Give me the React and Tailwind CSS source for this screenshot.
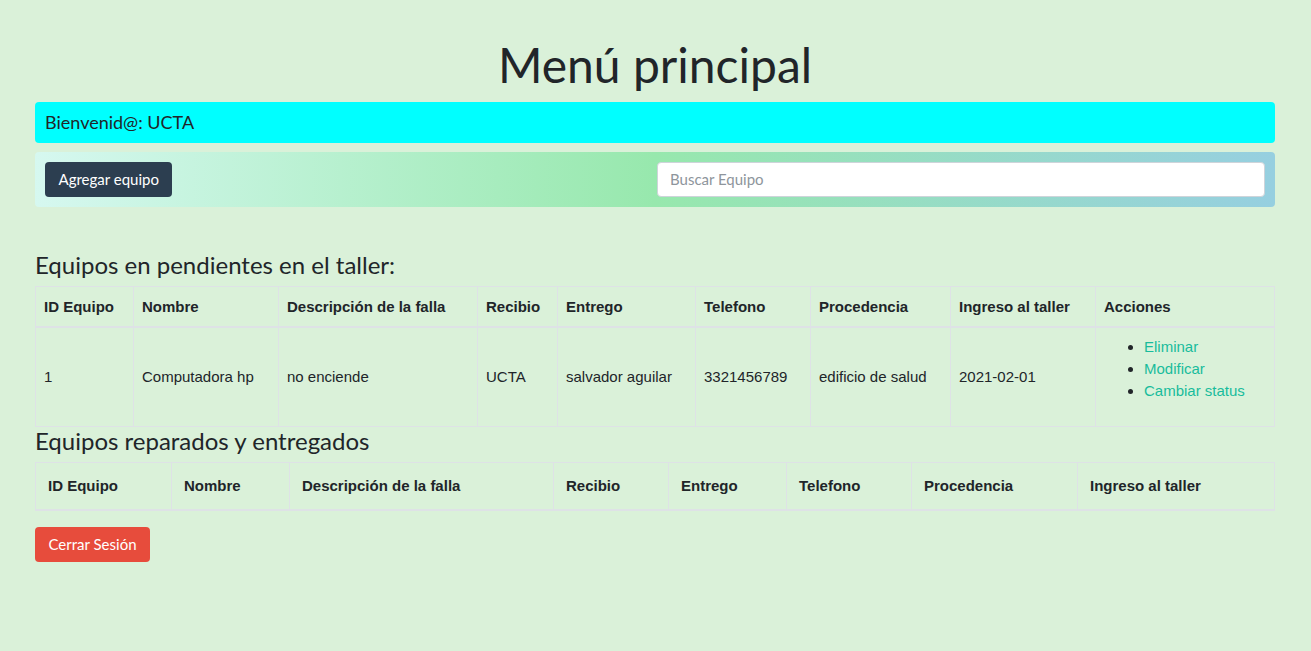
import React from "react";

const pending = [
  {
    id: "1",
    nombre: "Computadora hp",
    falla: "no enciende",
    recibio: "UCTA",
    entrego: "salvador aguilar",
    telefono: "3321456789",
    procedencia: "edificio de salud",
    ingreso: "2021-02-01",
  },
];

const headPending = [
  ["ID Equipo", "w-[98px]"],
  ["Nombre", "w-[145px]"],
  ["Descripción de la falla", "w-[199px]"],
  ["Recibio", "w-[80px]"],
  ["Entrego", "w-[138px]"],
  ["Telefono", "w-[115px]"],
  ["Procedencia", "w-[140px]"],
  ["Ingreso al taller", "w-[145px]"],
  ["Acciones", ""],
];

const headDone = [
  ["ID Equipo", "w-[136px]"],
  ["Nombre", "w-[118px]"],
  ["Descripción de la falla", "w-[264px]"],
  ["Recibio", "w-[115px]"],
  ["Entrego", "w-[118px]"],
  ["Telefono", "w-[125px]"],
  ["Procedencia", "w-[166px]"],
  ["Ingreso al taller", ""],
];

export default function App() {
  return (
    <div className="min-h-[651px] bg-[#daf1d9] font-['Lato',sans-serif] text-[#212529]">
      <div className="ml-[35px] mr-[36px] pt-[36px]">
        <h1 className="text-center text-[48px] leading-[1.2] mb-[8px]">Menú principal</h1>

        {/* welcome bar */}
        <div className="flex h-[41px] items-center rounded-[4px] bg-[#00ffff] px-[10px] text-[18px]">
          Bienvenid@: UCTA
        </div>

        {/* toolbar */}
        <div className="mt-[9px] flex items-center justify-between rounded-[4px] bg-[linear-gradient(to_right,#d6f8f0,#97e8ad_50%,#96cfe0)] p-[10px]">
          <button className="h-[35px] rounded-[4px] bg-[#2c3e50] px-[13.5px] text-[15px] text-white">
            Agregar equipo
          </button>
          <input
            placeholder="Buscar Equipo"
            className="h-[35px] w-[608px] rounded-[4px] border border-[#ced4da] bg-white px-[12px] text-[15px] placeholder:text-[#8e959c] outline-none"
          />
        </div>

        <h3 className="mt-[44px] mb-[7px] text-[24px] leading-[1.2]">Equipos en pendientes en el taller:</h3>
        <table className="w-full border-collapse font-['Liberation_Sans',Arial,sans-serif] text-[15px] leading-[22px]">
          <thead>
            <tr>
              {headPending.map(([h, w]) => (
                <th
                  key={h}
                  className={`${w} border border-b-2 border-[#dee2e6] px-[8px] pt-[9px] pb-[8px] text-left font-bold`}
                >
                  {h}
                </th>
              ))}
            </tr>
          </thead>
          <tbody>
            {pending.map((r) => (
              <tr key={r.id}>
                {[r.id, r.nombre, r.falla, r.recibio, r.entrego, r.telefono, r.procedencia, r.ingreso].map(
                  (v, i) => (
                    <td key={i} className="border border-[#dee2e6] p-[8px] align-middle">
                      {v}
                    </td>
                  )
                )}
                <td className="border border-[#dee2e6] p-[8px] align-middle">
                  <ul className="mb-[16px] list-disc pl-[40px] text-[#18bc9c]">
                    <li className="marker:text-[#212529]">Eliminar</li>
                    <li className="marker:text-[#212529]">Modificar</li>
                    <li className="marker:text-[#212529]">Cambiar status</li>
                  </ul>
                </td>
              </tr>
            ))}
          </tbody>
        </table>

        <h3 className="mb-[6px] text-[24px] leading-[1.2]">Equipos reparados y entregados</h3>
        <table className="w-full border-collapse font-['Liberation_Sans',Arial,sans-serif] text-[15px] leading-[22px]">
          <thead>
            <tr>
              {headDone.map(([h, w]) => (
                <th
                  key={h}
                  className={`${w} border border-b-2 border-[#dee2e6] p-[12px] text-left font-bold`}
                >
                  {h}
                </th>
              ))}
            </tr>
          </thead>
          <tbody></tbody>
        </table>

        <button className="mt-[16px] h-[35px] rounded-[4px] bg-[#e74c3c] px-[13.5px] text-[15px] text-white">
          Cerrar Sesión
        </button>
      </div>
    </div>
  );
}
